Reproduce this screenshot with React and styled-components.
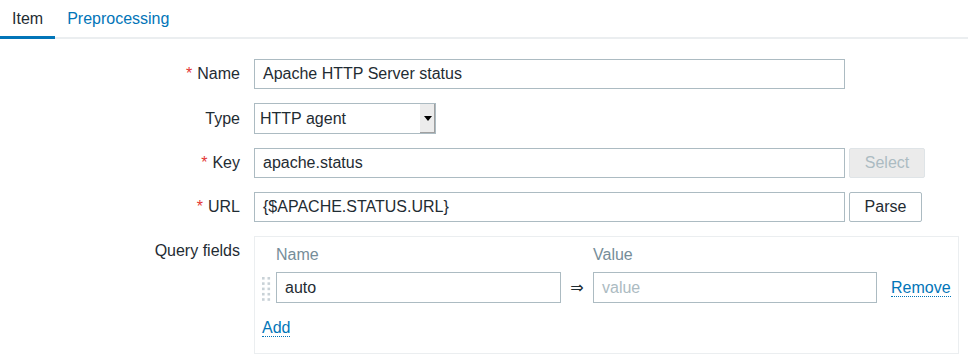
import React from 'react';
import styled, { createGlobalStyle } from 'styled-components';

const GlobalStyle = createGlobalStyle`
  body {
    margin: 0;
    background: #ffffff;
    font-family: "Liberation Sans", Arial, sans-serif;
    font-size: 16px;
    color: #1f2c33;
  }
`;

const Page = styled.div`
  width: 968px;
  height: 363px;
  overflow: hidden;
`;

const TabBar = styled.div`
  display: flex;
  height: 37px;
  border-bottom: 2px solid #ebeef0;
`;

const Tab = styled.div`
  padding: 0 12px;
  height: 36px;
  line-height: 37px;
  color: ${(p) => (p.active ? '#1f2c33' : '#0275b8')};
  border-bottom: 3px solid ${(p) => (p.active ? '#0275b8' : 'transparent')};
  margin-bottom: -2px;
  cursor: pointer;
`;

const Form = styled.div`
  display: grid;
  grid-template-columns: 240px 1fr;
  column-gap: 14px;
  row-gap: 14px;
  padding-top: 20px;
`;

const Label = styled.div`
  text-align: right;
  line-height: 18px;
  display: flex;
  justify-content: flex-end;
  align-items: ${(p) => (p.top ? 'flex-start' : 'center')};
  padding-top: ${(p) => (p.top ? '6px' : '0')};
`;

const Star = styled.span`
  color: #e33734;
  margin-right: 5px;
`;

const Field = styled.div`
  display: flex;
  align-items: center;
  gap: 4px;
`;

const TextInput = styled.div`
  box-sizing: border-box;
  width: ${(p) => p.width}px;
  height: ${(p) => p.height || 30}px;
  border: 1px solid #acbbc2;
  background: #fff;
  padding: 0 8px;
  display: flex;
  align-items: center;
  color: ${(p) => (p.placeholder ? '#acbbc2' : '#1f2c33')};
  white-space: nowrap;
`;

const Select = styled.div`
  box-sizing: border-box;
  width: 182px;
  height: 31px;
  border: 1px solid #acbbc2;
  display: flex;
  align-items: stretch;
`;

const SelectValue = styled.div`
  flex: 1;
  padding: 0 5px;
  display: flex;
  align-items: center;
`;

const SelectArrow = styled.div`
  width: 15px;
  background: #ececec;
  border-left: 1px solid #ffffff;
  box-shadow: inset -1px -1px 0 #a0a0a0;
  display: flex;
  align-items: center;
  justify-content: center;
  &::after {
    content: '';
    border-left: 4px solid transparent;
    border-right: 4px solid transparent;
    border-top: 5px solid #000;
  }
`;

const Button = styled.div`
  box-sizing: border-box;
  width: ${(p) => p.width}px;
  height: 30px;
  border: 1px solid ${(p) => (p.disabled ? '#dfe4e7' : '#acbbc2')};
  border-radius: 2px;
  background: ${(p) => (p.disabled ? '#ebebeb' : '#ffffff')};
  color: ${(p) => (p.disabled ? '#acbbc2' : '#1f2c33')};
  display: flex;
  align-items: center;
  justify-content: center;
`;

const QueryBox = styled.div`
  box-sizing: border-box;
  width: 705px;
  border: 1px solid #ebeef0;
  padding: 9px 9px 16px 5px;
`;

const QueryGrid = styled.div`
  display: grid;
  grid-template-columns: 16px 285px 32px 284px auto;
  align-items: center;
  row-gap: 8px;
`;

const HeadCell = styled.div`
  color: #768d99;
  line-height: 18px;
`;

const Handle = styled.div`
  display: flex;
  align-items: center;
  padding-left: 1px;
`;

const ArrowCell = styled.div`
  text-align: center;
  font-family: "DejaVu Sans", sans-serif;
  font-size: 16px;
  color: #1f2c33;
`;

const LinkText = styled.span`
  color: #0275b8;
  border-bottom: 1px dotted #0275b8;
  line-height: 18px;
  cursor: pointer;
`;

const RemoveCell = styled.div`
  padding-left: 14px;
`;

const AddRow = styled.div`
  padding: 16px 0 0 2px;
  line-height: 18px;
`;

const DragDots = () => (
  <svg width="10" height="26" viewBox="0 0 10 26">
    {[0, 1, 2, 3, 4].map((r) =>
      [0, 1].map((c) => (
        <rect key={`${r}-${c}`} x={1 + c * 5.5} y={2 + r * 5.3} width="2.6" height="2.6" fill="#c9d2d7" />
      ))
    )}
  </svg>
);

const App = () => (
  <Page>
    <GlobalStyle />
    <TabBar>
      <Tab active>Item</Tab>
      <Tab>Preprocessing</Tab>
    </TabBar>
    <Form>
      <Label><Star>*</Star>Name</Label>
      <Field>
        <TextInput width={591}>Apache HTTP Server status</TextInput>
      </Field>

      <Label>Type</Label>
      <Field>
        <Select>
          <SelectValue>HTTP agent</SelectValue>
          <SelectArrow />
        </Select>
      </Field>

      <Label><Star>*</Star>Key</Label>
      <Field>
        <TextInput width={591}>apache.status</TextInput>
        <Button width={76} disabled>Select</Button>
      </Field>

      <Label><Star>*</Star>URL</Label>
      <Field>
        <TextInput width={591}>{'{$APACHE.STATUS.URL}'}</TextInput>
        <Button width={73}>Parse</Button>
      </Field>

      <Label top>Query fields</Label>
      <div>
        <QueryBox>
          <QueryGrid>
            <div />
            <HeadCell>Name</HeadCell>
            <div />
            <HeadCell>Value</HeadCell>
            <div />

            <Handle><DragDots /></Handle>
            <TextInput width={285} height={31}>auto</TextInput>
            <ArrowCell>⇒</ArrowCell>
            <TextInput width={284} height={31} placeholder>value</TextInput>
            <RemoveCell><LinkText>Remove</LinkText></RemoveCell>
          </QueryGrid>
          <AddRow><LinkText>Add</LinkText></AddRow>
        </QueryBox>
      </div>
    </Form>
  </Page>
);

export default App;
